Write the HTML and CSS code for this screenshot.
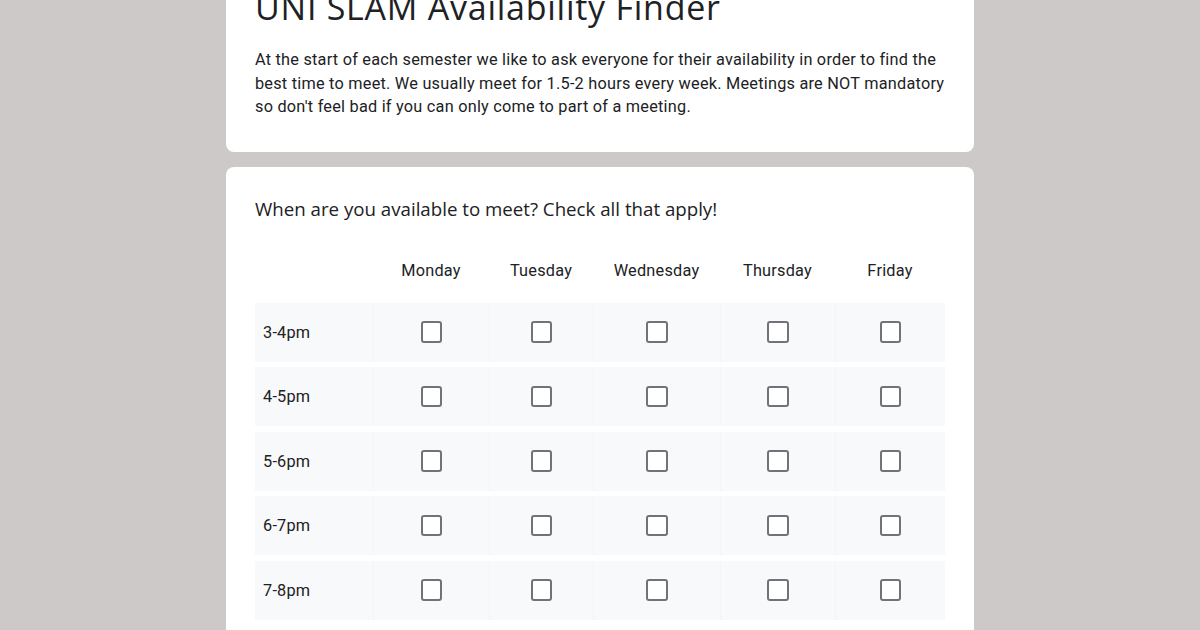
FILE: index.html
```html
<!DOCTYPE html>
<html>
<head>
<meta charset="utf-8">
<link rel="stylesheet" href="styles.css">
</head>
<body>
<div class="page">
  <section class="card intro">
    <h1 class="title">UNI SLAM Availability Finder</h1>
    <p class="desc">At the start of each semester we like to ask everyone for their availability in order to find the best time to meet. We usually meet for 1.5-2 hours every week. Meetings are NOT mandatory so don't feel bad if you can only come to part of a meeting.</p>
  </section>
  <section class="card question">
    <div class="qtext">When are you available to meet? Check all that apply!</div>
    <div class="grid">
      <div class="head">
        <div class="cell"></div>
        <div class="cell">Monday</div>
        <div class="cell">Tuesday</div>
        <div class="cell">Wednesday</div>
        <div class="cell">Thursday</div>
        <div class="cell">Friday</div>
      </div>
      <div class="row">
        <div class="cell label">3-4pm</div>
        <div class="cell"><span class="box"></span></div>
        <div class="cell"><span class="box"></span></div>
        <div class="cell"><span class="box"></span></div>
        <div class="cell"><span class="box"></span></div>
        <div class="cell"><span class="box"></span></div>
      </div>
      <div class="row">
        <div class="cell label">4-5pm</div>
        <div class="cell"><span class="box"></span></div>
        <div class="cell"><span class="box"></span></div>
        <div class="cell"><span class="box"></span></div>
        <div class="cell"><span class="box"></span></div>
        <div class="cell"><span class="box"></span></div>
      </div>
      <div class="row">
        <div class="cell label">5-6pm</div>
        <div class="cell"><span class="box"></span></div>
        <div class="cell"><span class="box"></span></div>
        <div class="cell"><span class="box"></span></div>
        <div class="cell"><span class="box"></span></div>
        <div class="cell"><span class="box"></span></div>
      </div>
      <div class="row">
        <div class="cell label">6-7pm</div>
        <div class="cell"><span class="box"></span></div>
        <div class="cell"><span class="box"></span></div>
        <div class="cell"><span class="box"></span></div>
        <div class="cell"><span class="box"></span></div>
        <div class="cell"><span class="box"></span></div>
      </div>
      <div class="row">
        <div class="cell label">7-8pm</div>
        <div class="cell"><span class="box"></span></div>
        <div class="cell"><span class="box"></span></div>
        <div class="cell"><span class="box"></span></div>
        <div class="cell"><span class="box"></span></div>
        <div class="cell"><span class="box"></span></div>
      </div>
    </div>
  </section>
</div>
</body>
</html>
```

FILE: styles.css
```css
html, body {
  margin: 0;
  padding: 0;
  background: #cdc9c8;
  height: 100%;
  overflow: hidden;
}
body {
  font-family: Roboto, "Liberation Sans", sans-serif;
  color: #202124;
}
.page {
  width: 748px;
  margin: -23px auto 0;
  display: flex;
  flex-direction: column;
  gap: 15px;
}
.card {
  background: #fff;
  border-radius: 8px;
  padding: 0 29px;
}
.intro {
  padding-top: 6px;
  padding-bottom: 33px;
}
.title {
  margin: 0;
  font-family: "Open Sans", sans-serif;
  font-weight: 400;
  font-size: 34px;
  line-height: 48px;
  letter-spacing: 0.75px;
  color: #202124;
}
.desc {
  margin: 17px 0 0;
  font-size: 16.3px;
  line-height: 23.5px;
  letter-spacing: 0.23px;
}
.question {
  padding-top: 30px;
  padding-bottom: 40px;
}
.qtext {
  font-family: "Open Sans", sans-serif;
  font-size: 18.7px;
  line-height: 24px;
  letter-spacing: 0;
}
.grid {
  margin-top: 30px;
  display: flex;
  flex-direction: column;
  gap: 5.5px;
}
.head, .row {
  display: grid;
  grid-template-columns: 118px 116px 104px 127px 115px 110px;
}
.head {
  height: 40px;
  margin-bottom: 6.5px;
  font-size: 16.3px;
  letter-spacing: 0.23px;
}
.row {
  height: 59px;
  background: #f8f9fa;
  font-size: 16.3px;
  letter-spacing: 0.23px;
}
.cell {
  display: flex;
  align-items: center;
  justify-content: center;
}
.row .cell + .cell {
  border-left: 1px solid #f3f4f5;
}
.cell.label {
  justify-content: flex-start;
  padding-left: 8px;
}
.box {
  width: 17.5px;
  height: 17.5px;
  border: 2.5px solid #707377;
  border-radius: 3px;
  background: #fff;
}
```
